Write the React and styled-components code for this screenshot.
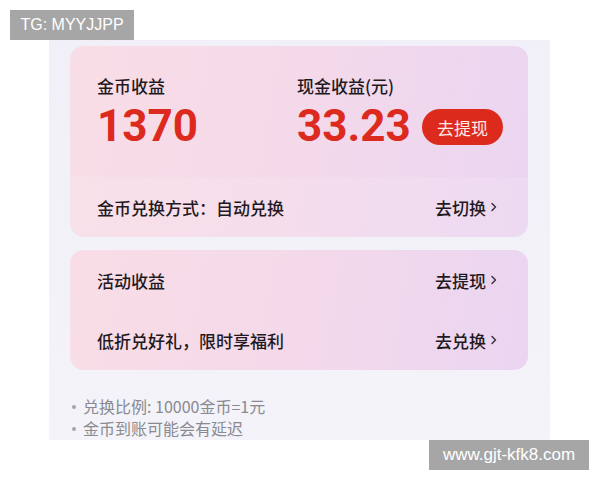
import styled, { createGlobalStyle } from 'styled-components';

const GlobalStyle = createGlobalStyle`
  html, body {
    margin: 0;
    padding: 0;
    background: #ffffff;
  }
  body {
    font-family: "Noto Sans CJK SC", "Noto Sans", sans-serif;
  }
`;

const Chevron = () => (
  <svg width="8" height="10" viewBox="0 0 8 10">
    <path d="M2 1.5 L5.5 5 L2 8.5" fill="none" stroke="#3a3340" strokeWidth="1.5" strokeLinecap="round" strokeLinejoin="round" />
  </svg>
);

export default function App() {
  return (
    <>
      <GlobalStyle />
      <Page>
        <Frame>
          <Card>
            <Stats>
              <Stat>
                <Label>金币收益</Label>
                <Amount>1370</Amount>
              </Stat>
              <Stat>
                <Label>现金收益(元)</Label>
                <AmountRow>
                  <Amount>33.23</Amount>
                  <Withdraw>去提现</Withdraw>
                </AmountRow>
              </Stat>
            </Stats>
            <Row $soft>
              <RowText>金币兑换方式：自动兑换</RowText>
              <RowLink>
                去切换 <Chevron />
              </RowLink>
            </Row>
          </Card>

          <Card>
            <Row>
              <RowText>活动收益</RowText>
              <RowLink>
                去提现 <Chevron />
              </RowLink>
            </Row>
            <Row>
              <RowText>低折兑好礼，限时享福利</RowText>
              <RowLink>
                去兑换 <Chevron />
              </RowLink>
            </Row>
          </Card>

          <Notes>
            <Note>兑换比例: 10000金币=1元</Note>
            <Note>金币到账可能会有延迟</Note>
          </Notes>
        </Frame>
        <Mark $top>TG: MYYJJPP</Mark>
        <Mark>www.gjt-kfk8.com</Mark>
      </Page>
    </>
  );
}

const Page = styled.div`
  position: relative;
  width: 600px;
  height: 480px;
  padding-top: 40px;
  box-sizing: border-box;
`;

const Frame = styled.div`
  margin-left: 49px;
  width: 501px;
  height: 400px;
  box-sizing: border-box;
  padding: 6px 22px 0 21px;
  background: linear-gradient(180deg, #f1f0f8 0%, #f3f3f9 100%);
  display: flex;
  flex-direction: column;
  gap: 13px;
`;

const Card = styled.div`
  border-radius: 14px;
  overflow: hidden;
  background: linear-gradient(100deg, #f9dde6 0%, #f4d9ea 50%, #ead5f1 100%);
  display: flex;
  flex-direction: column;
`;

const Stats = styled.div`
  display: grid;
  grid-template-columns: 200px 1fr;
  height: 131px;
  box-sizing: border-box;
  padding: 28px 25px 0 27px;
`;

const Stat = styled.div`
  display: flex;
  flex-direction: column;
  gap: 2px;
`;

const Label = styled.div`
  font-size: 17px;
  font-weight: 500;
  line-height: 24px;
  color: #1f1a22;
`;

const AmountRow = styled.div`
  display: flex;
  align-items: center;
  justify-content: space-between;
`;

const Amount = styled.div`
  font-family: Roboto, "Liberation Sans", sans-serif;
  font-weight: 700;
  font-size: 44px;
  line-height: 52px;
  color: #dd2a1f;
`;

const Withdraw = styled.div`
  width: 81px;
  height: 36px;
  border-radius: 18px;
  background: #dc2a1c;
  color: #ffe9e6;
  font-size: 17px;
  display: flex;
  align-items: center;
  justify-content: center;
  margin-top: 2px;
`;

const Row = styled.div`
  height: 60px;
  display: flex;
  align-items: center;
  justify-content: space-between;
  padding: 0 30px 0 27px;
  background: ${(p) => (p.$soft ? 'rgba(255, 255, 255, 0.12)' : 'transparent')};
`;

const RowText = styled.div`
  font-size: 17px;
  font-weight: 500;
  color: #1f1a22;
`;

const RowLink = styled.div`
  display: flex;
  align-items: center;
  gap: 4px;
  font-size: 17px;
  font-weight: 500;
  color: #1f1a22;
`;

const Notes = styled.div`
  margin-top: 12px;
  display: flex;
  flex-direction: column;
  gap: 0;
`;

const Note = styled.div`
  font-size: 16px;
  line-height: 22px;
  color: #8a8a90;
  padding-left: 13px;
  position: relative;
  &::before {
    content: '';
    position: absolute;
    left: 2px;
    top: 10px;
    width: 4px;
    height: 4px;
    border-radius: 50%;
    background: #a4a4aa;
  }
`;

const Mark = styled.div`
  position: absolute;
  ${(p) => (p.$top ? 'left: 10px; top: 10px; width: 124px;' : 'left: 429px; top: 440px; width: 160px;')}
  height: 30px;
  background: #a6a6a6;
  color: #ffffff;
  font-family: "Liberation Sans", Arial, sans-serif;
  font-size: ${(p) => (p.$top ? '16px' : '17px')};
  display: flex;
  align-items: center;
  justify-content: center;
`;
